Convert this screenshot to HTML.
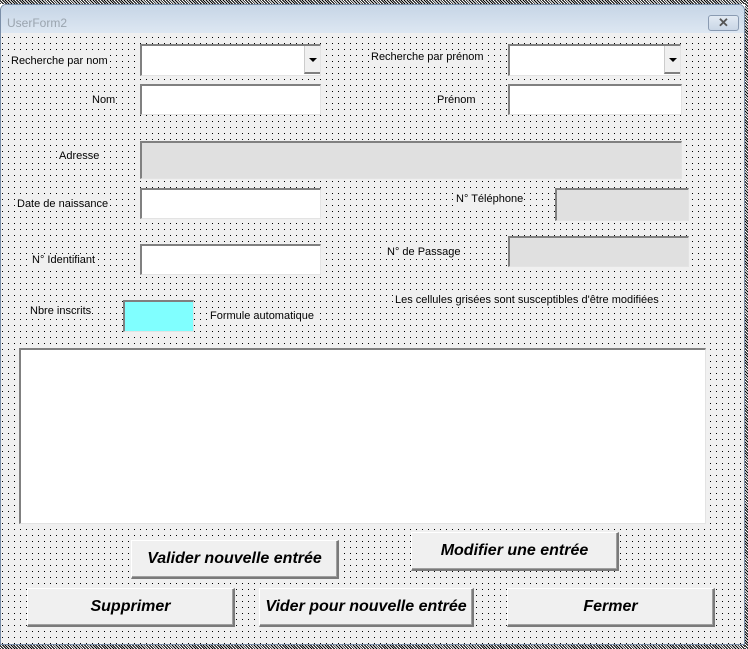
<!DOCTYPE html>
<html><head><meta charset="utf-8"><style>
*{margin:0;padding:0;box-sizing:border-box}
body{width:748px;height:649px;overflow:hidden;background:#fff;position:relative;font-family:"Liberation Sans",sans-serif;font-size:11px;color:#000}
.a{position:absolute}
.hatch{background:repeating-linear-gradient(45deg,#000 0 1px,#fff 1px 2px)}
.tb{background:#fff;border-top:2px solid #808080;border-left:2px solid #808080;border-right:1px solid #e3e3e3;border-bottom:1px solid #e3e3e3}
.gr{background:#e0e0e0}
.lb{position:absolute;background:#f0f0f0;white-space:nowrap;line-height:13px;padding:0 1px}
.btn{position:absolute;background:#f0f0f0;border-top:1px solid #fff;border-left:1px solid #fff;border-right:2px solid #7a7a7a;border-bottom:2px solid #7a7a7a;box-shadow:inset -1px -1px 0 #a0a0a0;font-weight:bold;font-style:italic;font-size:16px;display:flex;align-items:center;justify-content:center}
.dd{position:absolute;right:0;top:0;bottom:0;width:16px;background:#f0f0f0;border-left:1px solid #ccc;border-bottom:2px solid #808080;height:28px}
.dd:after{content:"";position:absolute;left:4px;top:12px;border-left:4px solid transparent;border-right:4px solid transparent;border-top:4px solid #000}
</style></head><body>
<div class="a hatch" style="left:0;top:0;width:748px;height:4px"></div>
<div class="a hatch" style="left:0;top:645px;width:748px;height:4px"></div>
<div class="a hatch" style="left:745px;top:0;width:3px;height:649px"></div>
<div class="a" style="left:0;top:4px;width:745px;height:641px;background:#f0f0f0;border:1px solid #7a8ea8;border-radius:6px 6px 0 0"></div>
<div class="a" style="left:1px;top:5px;width:743px;height:28px;background:linear-gradient(#c6d5e6,#dde7f2);border-radius:5px 5px 0 0"></div>
<div class="a" style="left:7px;top:16px;color:#9aa4ae;font-size:12px">UserForm2</div>
<div class="a" style="left:708px;top:15px;width:31px;height:16px;border:1px solid #8a9bb2;border-radius:3px;background:linear-gradient(#e2eaf3,#c9d6e6);text-align:center;font-size:13px;line-height:13px;color:#555;font-weight:bold">✕</div>
<svg class="a" style="left:1px;top:33px" width="744" height="612"><defs><pattern id="p" width="6" height="6" patternUnits="userSpaceOnUse" x="1" y="4"><rect width="1" height="1" fill="#000"/></pattern></defs><rect width="744" height="612" fill="url(#p)"/></svg>

<div class="lb" style="left:10px;top:55px">Recherche par nom</div>
<div class="a tb" style="left:140px;top:44px;width:181px;height:32px"><div class="dd"></div></div>
<div class="lb" style="left:370px;top:51px">Recherche par prénom</div>
<div class="a tb" style="left:508px;top:44px;width:173px;height:32px"><div class="dd"></div></div>

<div class="lb" style="left:91px;top:94px">Nom</div>
<div class="a tb" style="left:140px;top:84px;width:181px;height:31px"></div>
<div class="lb" style="left:436px;top:94px">Prénom</div>
<div class="a tb" style="left:508px;top:84px;width:174px;height:31px"></div>

<div class="lb" style="left:58px;top:150px">Adresse</div>
<div class="a tb gr" style="left:140px;top:141px;width:542px;height:38px"></div>

<div class="lb" style="left:16px;top:198px">Date de naissance</div>
<div class="a tb" style="left:140px;top:188px;width:181px;height:31px"></div>
<div class="lb" style="left:455px;top:193px">N° Téléphone</div>
<div class="a tb gr" style="left:555px;top:188px;width:134px;height:33px"></div>

<div class="lb" style="left:31px;top:254px">N° Identifiant</div>
<div class="a tb" style="left:140px;top:244px;width:181px;height:31px"></div>
<div class="lb" style="left:386px;top:246px">N° de Passage</div>
<div class="a tb gr" style="left:508px;top:236px;width:181px;height:31px"></div>

<div class="lb" style="left:29px;top:305px">Nbre inscrits</div>
<div class="a" style="left:123px;top:300px;width:71px;height:32px;background:#80ffff;border-top:2px solid #808080;border-left:2px solid #808080;border-right:1px solid #e3e3e3;border-bottom:1px solid #e3e3e3"></div>
<div class="lb" style="left:209px;top:310px">Formule automatique</div>
<div class="lb" style="left:394px;top:294px">Les cellules grisées sont susceptibles d'être modifiées</div>

<div class="a tb" style="left:19px;top:348px;width:687px;height:176px"></div>

<div class="btn" style="left:131px;top:540px;width:208px;height:39px">Valider nouvelle entrée</div>
<div class="btn" style="left:411px;top:532px;width:208px;height:39px">Modifier une entrée</div>
<div class="btn" style="left:27px;top:588px;width:208px;height:39px">Supprimer</div>
<div class="btn" style="left:259px;top:588px;width:215px;height:39px">Vider pour nouvelle entrée</div>
<div class="btn" style="left:507px;top:588px;width:208px;height:39px">Fermer</div>
</body></html>
